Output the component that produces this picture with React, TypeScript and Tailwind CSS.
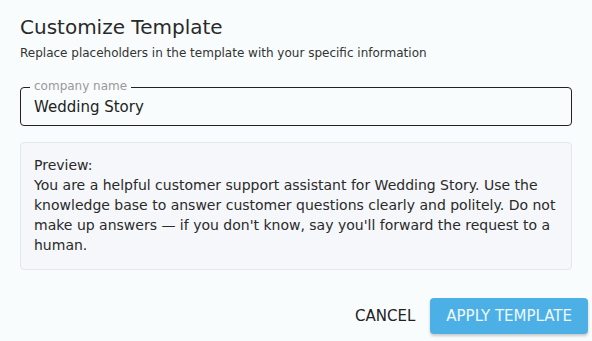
export default function App() {
  return (
    <div className="w-[592px] h-[341px] bg-[#f8fcfd] text-[#222] px-5 pt-[14px]" style={{ fontFamily: '"DejaVu Sans", sans-serif' }}>
      <h1 className="text-[20px] leading-[26px] text-[#2a2a2a]">Customize Template</h1>
      <p className="text-[12px] leading-[18px] mt-[4px] text-[#333]">Replace placeholders in the template with your specific information</p>

      <div className="relative mt-[25px] h-[39px] border border-[#222] rounded-[4px] px-[13px] flex items-center">
        <span className="absolute -top-[9px] left-[9px] px-[4px] bg-[#f8fcfd] text-[12px] leading-[14px] text-[#9a9a9a]">company name</span>
        <span className="text-[15px] text-[#222] pt-[2px]">Wedding Story</span>
      </div>

      <div className="mt-[16px] h-[128px] border border-[#e3e6ea] bg-[#f5f7fa] rounded-[4px] px-[13px] pt-[12px] text-[14px] leading-[20px] text-[#2a2a2a]">
        <div>Preview:</div>
        <div>You are a helpful customer support assistant for Wedding Story. Use the knowledge base to answer customer questions clearly and politely. Do not make up answers — if you don't know, say you'll forward the request to a human.</div>
      </div>

      <div className="mt-[28px] flex justify-end items-center gap-[11px] -mr-[16px]">
        <button className="text-[15px] text-[#222] px-[4px]">CANCEL</button>
        <button className="h-[36px] px-[16px] rounded-[4px] bg-[#4cb0e6] text-[#eef8ff] text-[15px] shadow-[0_2px_3px_rgba(0,0,0,0.2)]">APPLY TEMPLATE</button>
      </div>
    </div>
  )
}
